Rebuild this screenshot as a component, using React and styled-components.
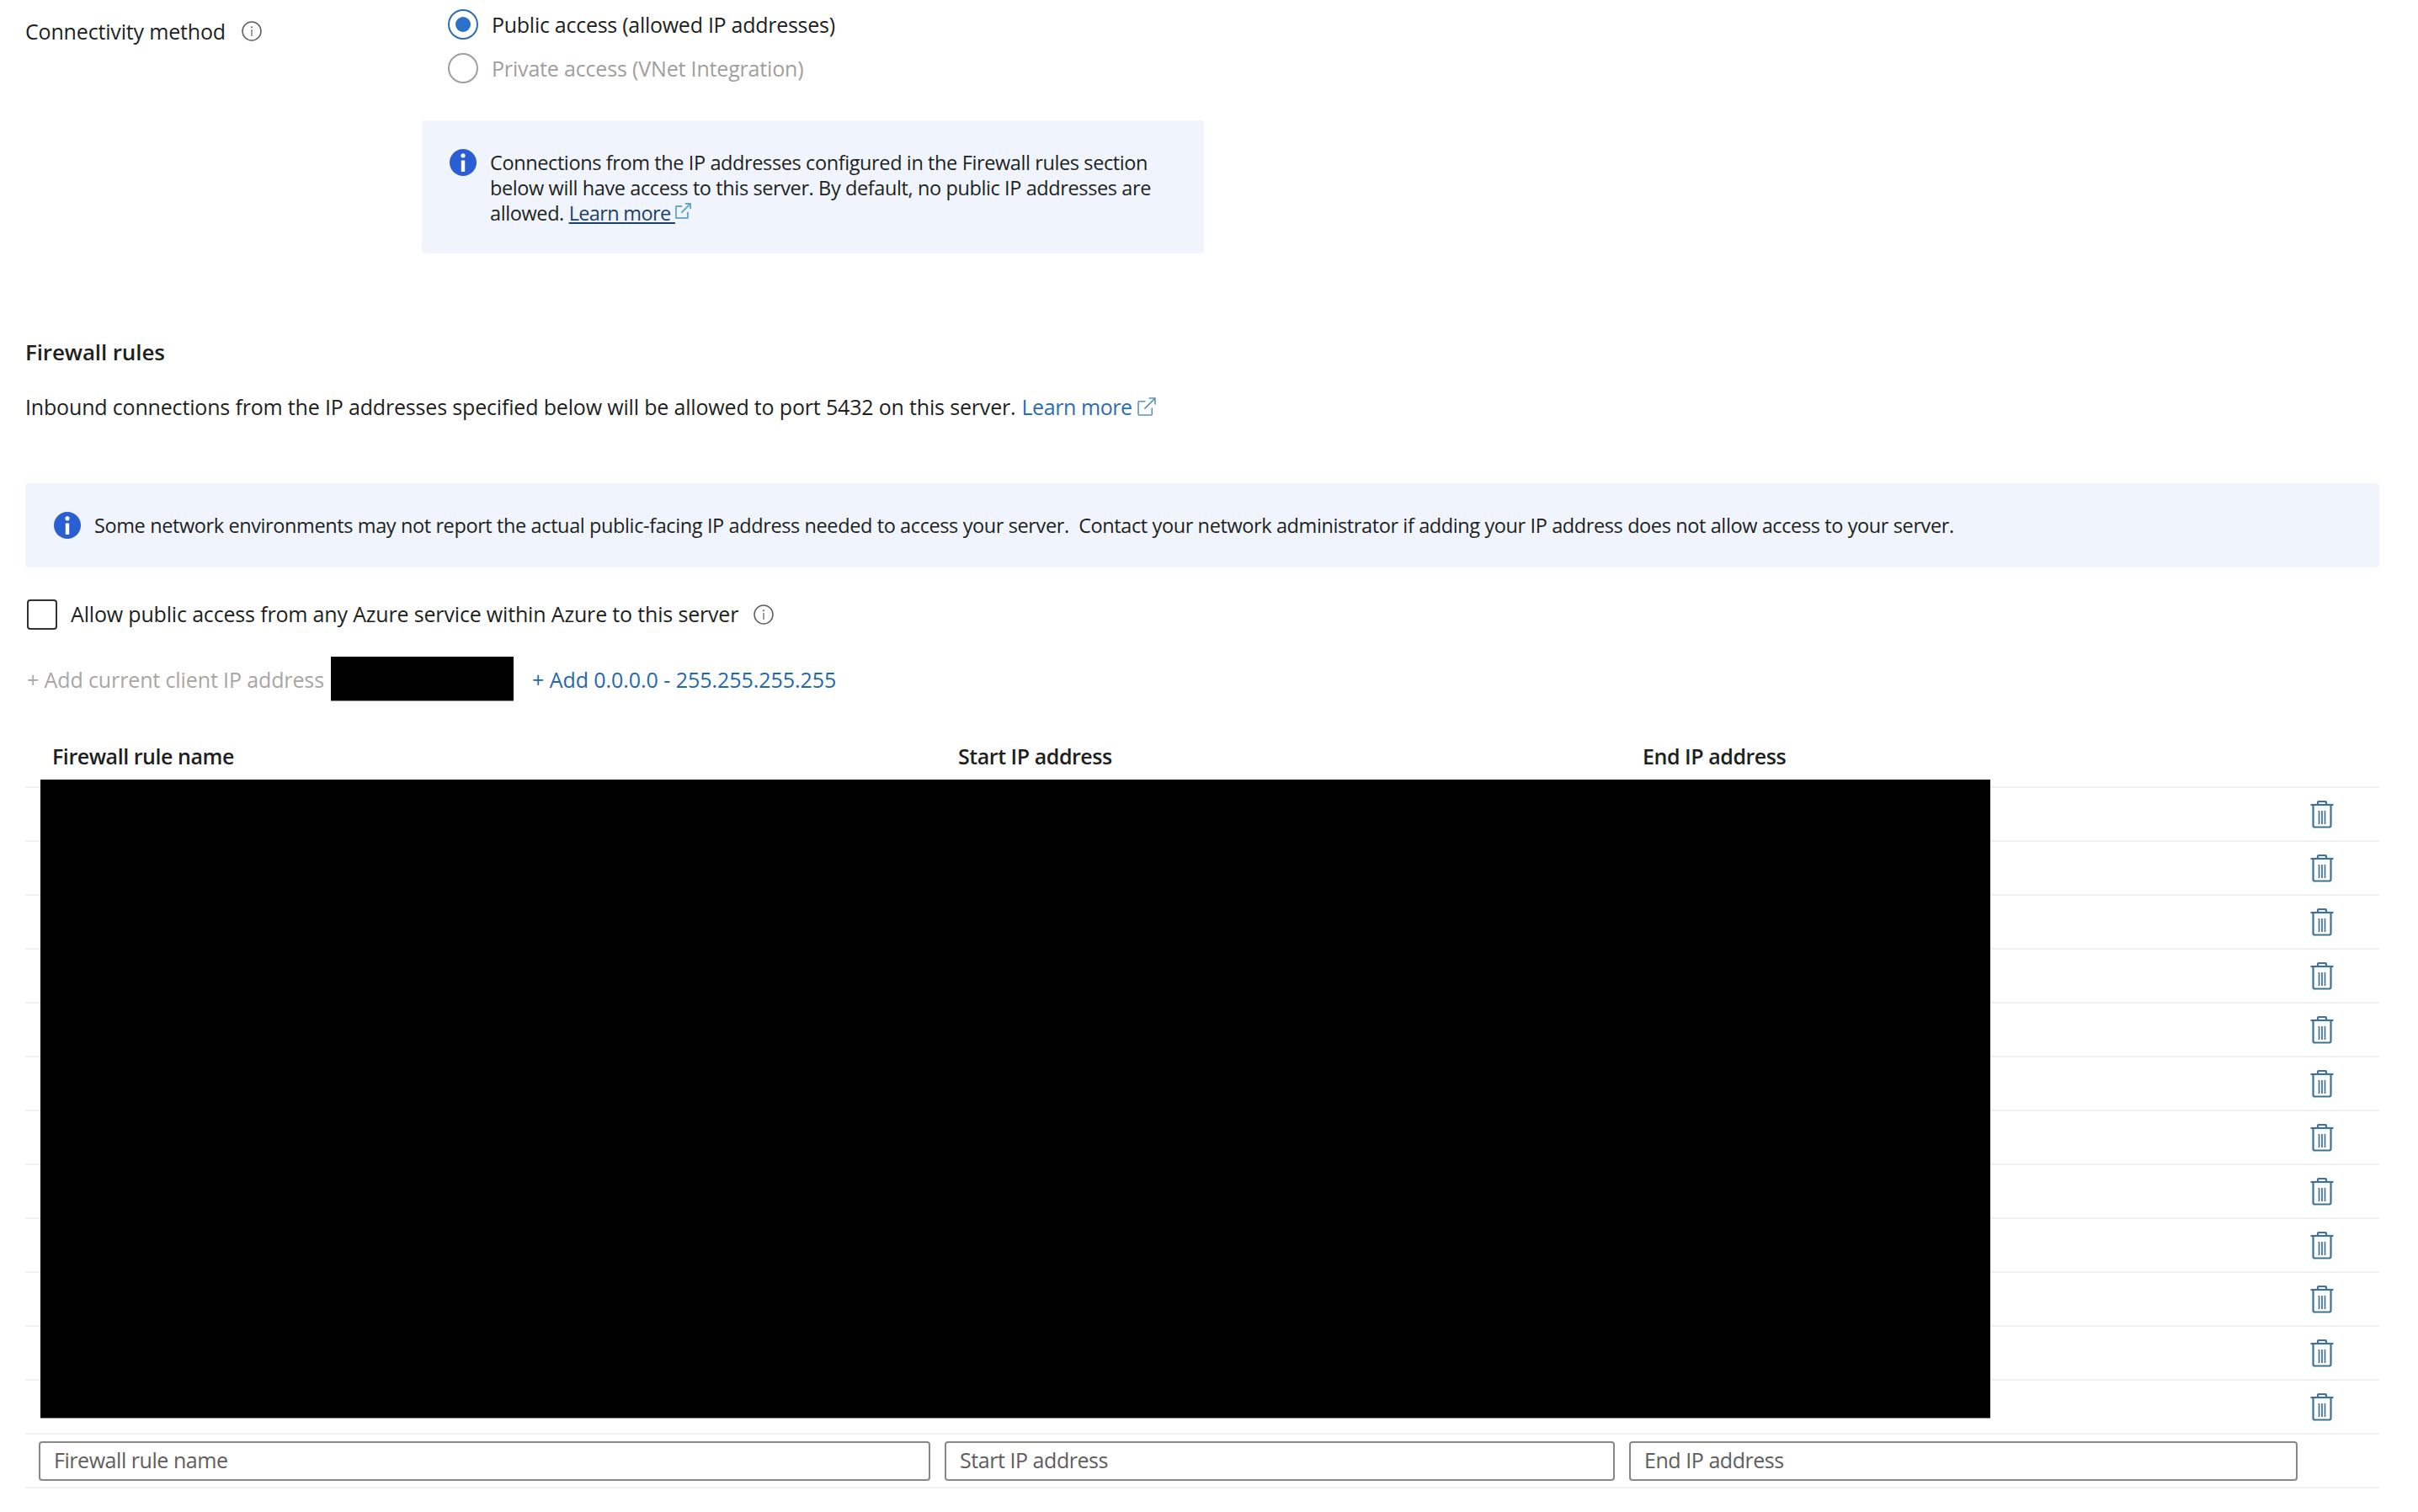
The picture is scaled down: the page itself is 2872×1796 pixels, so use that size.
import React from 'react'
import styled, { createGlobalStyle } from 'styled-components'

const GlobalStyle = createGlobalStyle`
  html, body {
    margin: 0;
    background: #fff;
  }
  * {
    box-sizing: border-box;
  }
`
const Page = styled.div`
  width: 2872px;
  height: 1796px;
  padding: 11px 46px 0 30px;
  overflow: hidden;
  background: #fff;
  color: #201f1e;
  font-family: 'Open Sans', 'Liberation Sans', sans-serif;
  font-size: 25px;
  letter-spacing: -0.17px;
`
const MethodRow = styled.div`
  display: flex;
`
const MethodLabel = styled.div`
  display: flex;
  align-items: center;
  gap: 19px;
  width: 471px;
  height: 34px;
  margin-top: 9px;
`
const MethodOptions = styled.div`
  display: flex;
  flex-direction: column;
`
const RadioGroup = styled.div`
  display: flex;
  flex-direction: column;
  gap: 16px;
  padding-left: 31px;
`
const RadioRow = styled.div`
  display: flex;
  align-items: center;
  gap: 16px;
  height: 36px;
  color: ${(p) => (p.$disabled ? '#a19f9d' : '#201f1e')};
  letter-spacing: ${(p) => (p.$disabled ? '-0.17px' : '-0.27px')};
`
const RadioCircle = styled.span`
  display: flex;
  align-items: center;
  justify-content: center;
  width: 36px;
  height: 36px;
  border: 2px solid ${(p) => (p.$checked ? '#2f6db5' : '#a19f9d')};
  border-radius: 50%;

  &::after {
    content: '';
    display: ${(p) => (p.$checked ? 'block' : 'none')};
    width: 18px;
    height: 18px;
    border-radius: 50%;
    background: #2b70c9;
  }
`
const InfoBox = styled.div`
  display: flex;
  gap: 16px;
  width: 929px;
  height: 158px;
  margin-top: 44px;
  padding: 34px 33px;
  border-radius: 3px;
  background: #f0f5fd;
  font-size: 23.5px;
  letter-spacing: -0.39px;
  line-height: 30px;
`
const BoxText = styled.div`
  flex: 1;
  margin-top: 1px;
`
const BoxLink = styled.a`
  color: #1c3f6e;
  letter-spacing: -0.65px;
  text-decoration: underline;
  white-space: pre;
`
const Heading = styled.h2`
  margin: 100px 0 0;
  font-size: 26px;
  font-weight: 600;
  letter-spacing: -0.12px;
  line-height: 34px;
`
const Intro = styled.div`
  display: flex;
  align-items: center;
  gap: 7px;
  height: 34px;
  margin-top: 32px;
  padding-bottom: 2px;
  white-space: pre;
`
const IntroLink = styled.a`
  display: inline-flex;
  align-items: center;
  gap: 6px;
  color: #2a6db3;
  letter-spacing: -0.42px;
`
const Banner = styled.div`
  display: flex;
  align-items: center;
  gap: 16px;
  height: 100px;
  margin-top: 73px;
  padding-left: 34px;
  border-radius: 3px;
  background: #f0f5fd;
  font-size: 23.5px;
  letter-spacing: -0.39px;
  white-space: pre;
`
const CheckRow = styled.label`
  display: flex;
  align-items: center;
  height: 36px;
  margin: 38px 0 0 2px;
`
const CheckBox = styled.span`
  width: 36px;
  height: 36px;
  margin-right: 16px;
  border: 2px solid #323130;
  border-radius: 4px;
`
const CheckText = styled.span`
  margin-bottom: 2px;
`
const CheckHint = styled.span`
  display: flex;
  margin-left: 18px;
`
const AddRow = styled.div`
  display: flex;
  align-items: center;
  height: 53px;
  margin: 32px 0 0 2px;
`
const AddAction = styled.a`
  color: ${(p) => (p.$disabled ? '#a8a6a4' : '#1f68ad')};
  letter-spacing: ${(p) => (p.$disabled ? '-0.12px' : '-0.05px')};
`
const HiddenIp = styled.span`
  width: 217px;
  height: 53px;
  margin: 0 22px 0 8px;
  border-bottom: 1px solid #8a8a8a;
  background: #000;
`
const Table = styled.div`
  position: relative;
  margin-top: 34px;
`
const Row = styled.div`
  display: grid;
  grid-template-columns: 1059px 796px 794px 1fr;
  column-gap: 17px;
  align-items: center;
  height: ${(p) => (p.$head ? '69px' : '64px')};
  padding: ${(p) => (p.$head ? '0 0 6px 16px' : '0 0 0 16px')};
  border-bottom: 2px solid #f0f0f0;
`
const HeadCell = styled.div`
  padding-left: 16px;
  font-weight: 600;
  letter-spacing: -0.45px;
`
const RuleInput = styled.input`
  width: 100%;
  height: 47px;
  padding: 0 16px 2px;
  border: 2px solid #8a8886;
  border-radius: 4px;
  outline: none;
  color: #201f1e;
  font: inherit;
  letter-spacing: -0.45px;

  &::placeholder {
    color: #605e5c;
    opacity: 1;
  }
`
const DeleteButton = styled.button`
  display: flex;
  justify-self: start;
  margin-left: -2px;
  padding: 0;
  border: 0;
  background: none;
`
const Redaction = styled.div`
  position: absolute;
  top: 59px;
  left: 18px;
  width: 2316px;
  height: 759px;
  border-bottom: 1px solid #8a8a8a;
  background: #000;
`
const ExternalSvg = styled.svg`
  width: ${(p) => p.$size}px;
  height: ${(p) => p.$size}px;
  fill: none;
  stroke: ${(p) => p.$color};
  stroke-width: ${(p) => p.$weight};
  vertical-align: 2px;
`

function InfoFilled() {
  return (
    <svg width="32" height="32" viewBox="0 0 32 32" style={{ flexShrink: 0 }}>
      <circle cx="16" cy="16" r="16" fill="#2a5fd3" />
      <circle cx="16" cy="7.8" r="2.6" fill="#fff" />
      <rect x="13.8" y="13.5" width="4.4" height="13.5" rx="0.8" fill="#fff" />
    </svg>
  )
}

function InfoOutline() {
  return (
    <svg width="24" height="24" viewBox="0 0 24 24">
      <circle cx="12" cy="12" r="11" fill="none" stroke="#5f5e5c" strokeWidth="1.5" />
      <circle cx="12" cy="7.2" r="1" fill="#5f5e5c" />
      <rect x="11.4" y="10" width="1.2" height="8" fill="#5f5e5c" />
    </svg>
  )
}

function ExternalIcon({ size, color, weight }) {
  return (
    <ExternalSvg viewBox="0 0 21 21" $size={size} $color={color} $weight={weight}>
      <path d="M9 4.5H2a1 1 0 0 0-1 1V19a1 1 0 0 0 1 1h13.5a1 1 0 0 0 1-1v-7" />
      <path d="M8 13L19.5 1.5M13 1h7v7" />
    </ExternalSvg>
  )
}

function TrashIcon() {
  return (
    <svg width="28" height="33" viewBox="0 0 28 33" fill="none" stroke="#3f7299" strokeWidth="2.2">
      <path d="M0.5 5H27.5" />
      <path d="M9 5V2.5a1.5 1.5 0 0 1 1.5-1.5h7a1.5 1.5 0 0 1 1.5 1.5V5" />
      <path d="M3.5 5V29.5a2 2 0 0 0 2 2h17a2 2 0 0 0 2-2V5" />
      <path d="M10.5 12V28M14 12V28M17.5 12V28" strokeWidth="1.7" />
    </svg>
  )
}

const savedRules = Array.from({ length: 12 }, (_, i) => i)

function App() {
  return (
    <Page>
      <GlobalStyle />
      <MethodRow>
        <MethodLabel>
          Connectivity method
          <InfoOutline />
        </MethodLabel>
        <MethodOptions>
          <RadioGroup>
            <RadioRow>
              <RadioCircle $checked />
              Public access (allowed IP addresses)
            </RadioRow>
            <RadioRow $disabled>
              <RadioCircle />
              Private access (VNet Integration)
            </RadioRow>
          </RadioGroup>
          <InfoBox>
            <InfoFilled />
            <BoxText>
              Connections from the IP addresses configured in the Firewall rules section below will
              have access to this server. By default, no public IP addresses are allowed.{' '}
              <BoxLink>Learn more </BoxLink>
              <ExternalIcon size={19} color="#6aa9cc" weight={2.2} />
            </BoxText>
          </InfoBox>
        </MethodOptions>
      </MethodRow>

      <Heading>Firewall rules</Heading>
      <Intro>
        Inbound connections from the IP addresses specified below will be allowed to port 5432 on
        this server.
        <IntroLink>
          Learn more
          <ExternalIcon size={22} color="#5b8fc0" weight={1.5} />
        </IntroLink>
      </Intro>

      <Banner>
        <InfoFilled />
        Some network environments may not report the actual public-facing IP address needed to
        access your server.{'  '}Contact your network administrator if adding your IP address does
        not allow access to your server.
      </Banner>

      <CheckRow>
        <CheckBox />
        <CheckText>Allow public access from any Azure service within Azure to this server</CheckText>
        <CheckHint>
          <InfoOutline />
        </CheckHint>
      </CheckRow>

      <AddRow>
        <AddAction $disabled>+ Add current client IP address</AddAction>
        <HiddenIp />
        <AddAction>+ Add 0.0.0.0 - 255.255.255.255</AddAction>
      </AddRow>

      <Table>
        <Row $head>
          <HeadCell>Firewall rule name</HeadCell>
          <HeadCell>Start IP address</HeadCell>
          <HeadCell>End IP address</HeadCell>
        </Row>
        {savedRules.map((id) => (
          <Row key={id}>
            <div />
            <div />
            <div />
            <DeleteButton aria-label="Delete rule">
              <TrashIcon />
            </DeleteButton>
          </Row>
        ))}
        <Row>
          <RuleInput placeholder="Firewall rule name" />
          <RuleInput placeholder="Start IP address" />
          <RuleInput placeholder="End IP address" />
        </Row>
        <Redaction />
      </Table>
    </Page>
  )
}

export default App
